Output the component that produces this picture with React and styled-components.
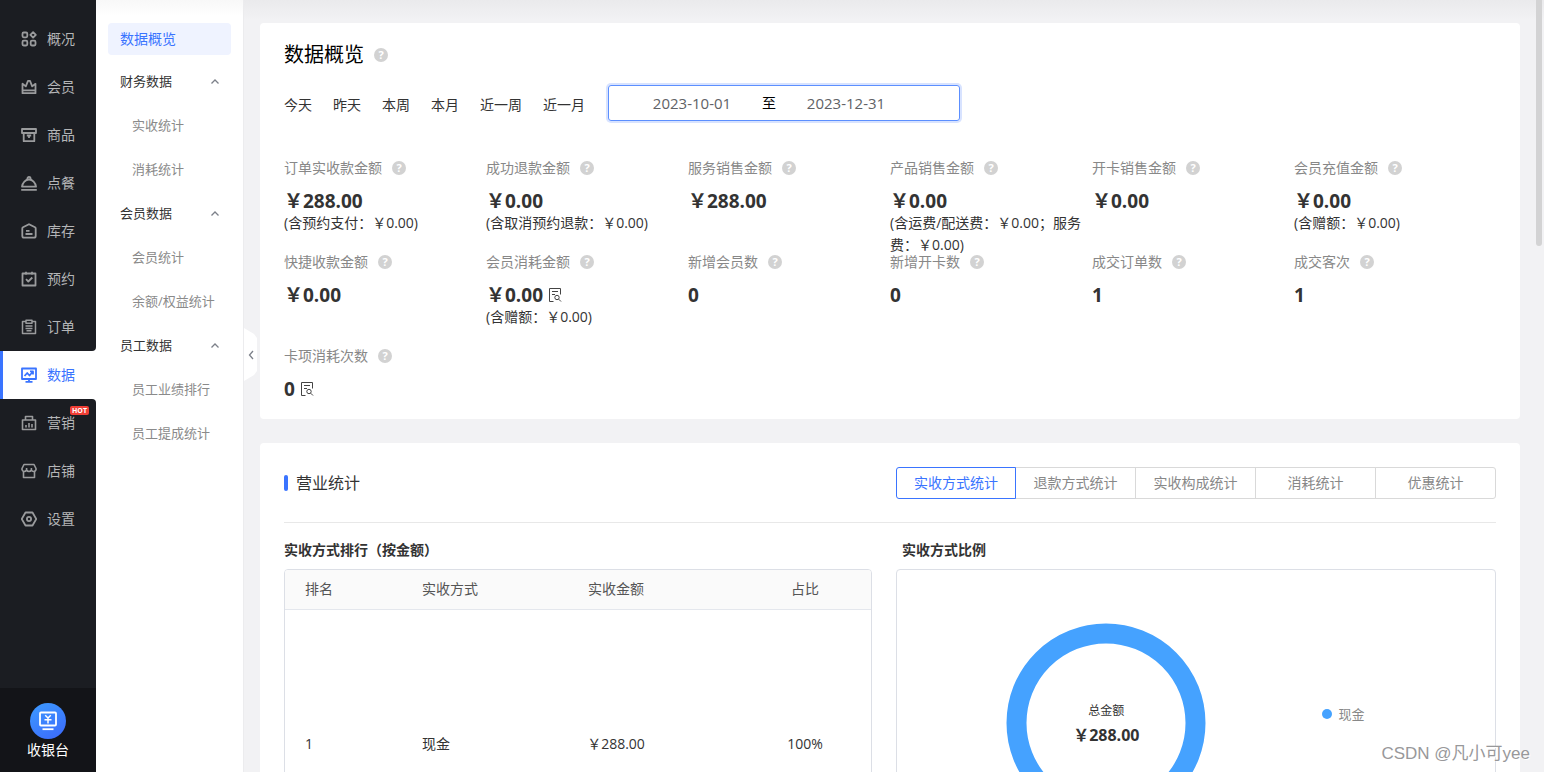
import React, { useState } from 'react';
import styled, { createGlobalStyle, css } from 'styled-components';

// ----- global -----

const GlobalStyle = createGlobalStyle`
    * {
        box-sizing: border-box;
    }
    body {
        margin: 0;
        overflow: hidden;
        color: #333333;
        background-color: #f2f2f4;
        font-family: "Open Sans", "Noto Sans CJK SC", sans-serif;
        font-size: 14px;
        line-height: 22px;
    }
    button, input {
        font-family: inherit;
        font-size: inherit;
        line-height: inherit;
    }
`

// ----- main layout -----

const Page = styled.div`
    display: flex;
    height: 100vh;
    overflow: hidden;
`

const Sidebar = styled.nav`
    display: flex;
    flex-direction: column;
    flex: none;
    width: 96px;
    background-color: #ffffff;
`

const DarkGroup = styled.div`
    background-color: #1b1d22;
    ${p => p.$top && css`
        padding-top: 15px;
        border-bottom-right-radius: 4px;
    `}
    ${p => p.$rest && css`
        flex: 1;
        border-top-right-radius: 4px;
    `}
`

const MenuLink = styled.a`
    position: relative;
    display: flex;
    align-items: center;
    gap: 10px;
    height: 48px;
    padding-left: 21px;
    color: ${p => p.$active ? '#3a74ff' : '#b4b5b7'};
    text-decoration: none;
    ${p => p.$active && css`
        padding-left: 18px;
        border-left: 3px solid #3a74ff;
    `}
`

const MenuIcon = styled.svg`
    flex: none;
    width: 16px;
    height: 16px;
    fill: none;
    stroke: ${p => p.$active ? '#3a74ff' : '#9a9b9d'};
    stroke-width: 1.8;
`

const HotBadge = styled.span`
    position: absolute;
    top: 7px;
    right: 7px;
    padding: 0 2px;
    border-radius: 2px;
    background-color: #f03e35;
    color: #ffffff;
    font-size: 7px;
    font-weight: bold;
    line-height: 9px;
`

const Cashier = styled.button`
    display: flex;
    flex-direction: column;
    align-items: center;
    height: 84px;
    padding: 15px 0 0;
    border: none;
    background-color: #131418;
    color: #ffffff;
    cursor: pointer;
`

const CashierIcon = styled.span`
    display: flex;
    align-items: center;
    justify-content: center;
    width: 36px;
    height: 36px;
    border-radius: 50%;
    background: linear-gradient(150deg, #3c9bff, #3c68fb);
`

// ----- second menu -----

const SubMenu = styled.nav`
    flex: none;
    width: 148px;
    padding: 23px 12px 0;
    border-right: 1px solid #ececee;
    background: linear-gradient(#f8f8f8, #ffffff 16px);
`

const SubActive = styled.a`
    display: block;
    padding: 0 12px;
    border-radius: 4px;
    background-color: #eff3ff;
    color: #3a74ff;
    line-height: 32px;
    text-decoration: none;
`

const SubTitle = styled.button`
    display: flex;
    align-items: center;
    justify-content: space-between;
    width: 100%;
    height: 44px;
    padding: 0 11px 0 12px;
    border: none;
    background: none;
    color: #333333;
    font-size: 13px;
    cursor: pointer;
`

const SubLink = styled.a`
    display: block;
    padding-left: 24px;
    color: #8a8a8a;
    font-size: 13px;
    line-height: 44px;
    text-decoration: none;
`

const SubGroups = styled.div`
    margin-top: 4px;
`

const Arrow = styled.svg`
    fill: none;
    stroke: #7c8089;
    stroke-width: 1.3;
`

const Collapse = styled.button`
    position: absolute;
    top: 328px;
    left: 0;
    width: 14px;
    height: 53px;
    padding: 0;
    border: none;
    background-color: #ffffff;
    clip-path: polygon(0 0, 10px 6px, 13px 10px, 13px 43px, 10px 47px, 0 53px);
    line-height: 0;
    cursor: pointer;
`

// ----- content -----

const Main = styled.main`
    position: relative;
    flex: 1;
    min-width: 0;
    overflow: hidden;
    padding: 23px 24px 0 16px;
    background: linear-gradient(#eaeaec, #f2f2f4 20px);
`

const Card = styled.section`
    margin-bottom: 24px;
    padding: 0 24px;
    border-radius: 4px;
    background-color: #ffffff;
`

const PageTitle = styled.h1`
    display: flex;
    align-items: center;
    gap: 10px;
    margin: 0;
    padding-top: 17px;
    color: #000000;
    font-size: 20px;
    font-weight: normal;
    line-height: 30px;
`

const Filters = styled.div`
    display: flex;
    align-items: center;
    gap: 21px;
    margin-top: 15px;
`

const RangeButton = styled.button`
    padding: 3px 0 0;
    border: none;
    background: none;
    color: #333333;
    cursor: pointer;
`

const DateRange = styled.div`
    display: flex;
    align-items: center;
    width: 352px;
    height: 36px;
    margin-left: 2px;
    padding: 0 43px 0 13px;
    border: 1px solid #5c8fff;
    border-radius: 3px;
    box-shadow: 0 0 0 2px #d8e3ff;
    color: #000000;
`

const DateInput = styled.input`
    flex: 1;
    min-width: 0;
    padding: 0;
    border: none;
    outline: none;
    background: none;
    color: #606266;
    font-size: 15px;
    text-align: center;
`

const Stats = styled.dl`
    display: grid;
    grid-template-columns: repeat(6, 1fr);
    grid-template-rows: 94px 94px;
    margin: 0;
    padding: 36px 0 19px;
`

const StatLabel = styled.dt`
    display: flex;
    align-items: center;
    gap: 10px;
    color: #888888;
`

const StatValue = styled.dd`
    display: flex;
    align-items: center;
    gap: 5px;
    margin: 11px 0 0;
    font-size: 19px;
    font-weight: bold;
`

const StatNote = styled.dd`
    margin: 0;
`

const HelpMark = styled.span`
    display: inline-flex;
    align-items: center;
    justify-content: center;
    width: 14px;
    height: 14px;
    border-radius: 50%;
    background-color: #d2d2d2;
    color: #ffffff;
    font-size: 11px;
    font-weight: bold;
    line-height: 14px;
`

// ----- business statistics -----

const SectionHead = styled.div`
    display: flex;
    align-items: center;
    justify-content: space-between;
    height: 80px;
    border-bottom: 1px solid #e8e8e8;
`

const SectionTitle = styled.h2`
    display: flex;
    align-items: center;
    gap: 8px;
    margin: 0;
    font-size: 16px;
    font-weight: normal;

    &::before {
        content: '';
        width: 4px;
        height: 16px;
        border-radius: 2px;
        background-color: #3a74ff;
    }
`

const Tabs = styled.div`
    display: flex;
`

const Tab = styled.button`
    width: 121px;
    height: 32px;
    margin-left: -1px;
    padding: 0;
    border: 1px solid ${p => p.$active ? '#3a74ff' : '#d9d9d9'};
    background-color: #ffffff;
    color: ${p => p.$active ? '#3a74ff' : '#888888'};
    cursor: pointer;
    ${p => p.$active && 'z-index: 1;'}

    &:first-child {
        width: 120px;
        margin-left: 0;
        border-radius: 3px 0 0 3px;
    }
    &:last-child {
        border-radius: 0 3px 3px 0;
    }
`

const Columns = styled.div`
    display: grid;
    grid-template-columns: 49fr 50fr;
    gap: 24px;
    padding: 16px 0 24px;
`

const Panel = styled.div`
    display: flex;
    flex-direction: column;
`

const PanelTitle = styled.h3`
    margin: 0 0 8px;
    padding-left: ${p => p.$indent ? '6px' : '0'};
    font-size: 14px;
    line-height: 22px;
`

const PanelBox = styled.div`
    border: 1px solid #dcdfe6;
    border-radius: 4px;
    overflow: hidden;
`

const RankTable = styled.table`
    width: 100%;
    border-collapse: collapse;
    table-layout: fixed;
    text-align: left;

    th {
        height: 39px;
        padding: 0;
        border-bottom: 1px solid #e4e7ed;
        background-color: #fafafa;
        color: #555555;
        font-weight: normal;
    }
    td {
        height: 270px;
        padding: 0;
    }
    th:first-child, td:first-child {
        width: 137px;
        padding-left: 20px;
    }
    th:nth-child(2) {
        width: 141px;
    }
    th:nth-child(3), td:nth-child(3) {
        width: 106px;
        text-align: center;
    }
    th:last-child, td:last-child {
        padding-left: 70px;
        text-align: center;
    }
`

const ChartBox = styled(PanelBox)`
    display: grid;
    grid-template-columns: 70% 30%;
    align-items: center;
    height: 308px;
`

const Donut = styled.div`
    display: grid;
    place-items: center;

    & > * {
        grid-area: 1 / 1;
    }
`

const DonutText = styled.div`
    text-align: center;
    font-size: 12px;
    line-height: 24px;

    strong {
        display: block;
        font-size: 16px;
    }
`

const Legend = styled.div`
    display: flex;
    align-items: center;
    gap: 7px;
    margin-bottom: 18px;
    padding-left: 6px;
    color: #888888;
    font-size: 13px;

    &::before {
        content: '';
        width: 10px;
        height: 10px;
        border-radius: 50%;
        background-color: #45a2ff;
    }
`

const ScrollThumb = styled.div`
    position: absolute;
    top: 0;
    right: 2px;
    width: 6px;
    height: 246px;
    border-radius: 0 0 3px 3px;
    background-color: #d3d3d4;
`

const Watermark = styled.div`
    position: absolute;
    right: 14px;
    bottom: 7px;
    color: #98989a;
    font-family: "Liberation Sans", "Noto Sans CJK SC", sans-serif;
    font-size: 17px;
    text-shadow: 1px 1px 0 #ffffff;
`

// ----- data -----

const icons = {
    overview: <><rect x="1.5" y="1.5" width="4.8" height="4.8" rx="1.2" /><rect x="1.5" y="9.7" width="4.8" height="4.8" rx="1.2" /><rect x="9.7" y="9.7" width="4.8" height="4.8" rx="1.2" /><path d="M12.1 1.2 14.8 3.9 12.1 6.6 9.4 3.9Z" strokeLinejoin="round" /></>,
    member: <path d="M1.5 4.8v9.4h13V4.8l-3.3 2.6L9 1.8H7L4.8 7.4ZM2 11.3h12" strokeLinejoin="round" />,
    goods: <path d="M1 2h14v4H1ZM2.7 6v8.2h10.6V6M5.8 8.5h4.4M8 8.5v2.5" strokeLinejoin="round" />,
    dining: <path d="M.2 14.8h15.6M1 11.7h14C14.5 7.5 11.5 4.5 8 4.5S1.5 7.5 1 11.7ZM6.3 4.3C6.3 1 9.7 1 9.7 4.3" strokeLinejoin="round" />,
    stock: <path d="M1.3 5.5Q1.3 4.7 2 4.3L8 1.3 14 4.3Q14.7 4.7 14.7 5.5V13Q14.7 14.7 13 14.7H3Q1.3 14.7 1.3 13ZM5 7.8h3.5M4.5 11h7" />,
    booking: <path d="M1.5 2.5h13v12h-13ZM5 .8v3M11 .8v3M5 8.2l2.3 2.3L11.3 6.5" strokeLinejoin="round" />,
    order: <path d="M5 2.5H1.5v12h13v-12H11M5 1.2h6v3H5ZM4.5 7h7M4.5 9.4h7M5.5 11.8h5" strokeWidth="1.5" strokeLinejoin="round" />,
    data: <path d="M1 1.5h14v10.5H1ZM8 12v2.5M4.5 14.8h7M3.5 9l2.7-3 2.3 2.5 3.5-4M9 4.4h3v3" strokeLinejoin="round" />,
    marketing: <path d="M1.5 5h13v9.5h-13ZM4.5 5V1.5h7V5M5 10v2.5M8 8v4.5M11 9v3.5" strokeWidth="1.6" strokeLinejoin="round" />,
    shop: <path d="M3 1.5h10l2 4v1.3Q14.5 8.5 12.8 8.5T10.4 7Q9.5 8.5 8 8.5T5.6 7Q4.7 8.5 3.2 8.5T1 6.8V5.5ZM2.5 8.5v6h11v-6M5.6 5v2.5M10.4 5v2.5" strokeWidth="1.6" strokeLinejoin="round" />,
    settings: <><path d="M4.5 1.5h7L15.3 8l-3.8 6.5h-7L.7 8Z" strokeLinejoin="round" /><circle cx="8" cy="8" r="2.1" /></>,
}

const menuTop = [
    { icon: 'overview', text: '概况' },
    { icon: 'member', text: '会员' },
    { icon: 'goods', text: '商品' },
    { icon: 'dining', text: '点餐' },
    { icon: 'stock', text: '库存' },
    { icon: 'booking', text: '预约' },
    { icon: 'order', text: '订单' },
]

const menuRest = [
    { icon: 'marketing', text: '营销', hot: true },
    { icon: 'shop', text: '店铺' },
    { icon: 'settings', text: '设置' },
]

const subMenu = [
    { title: '财务数据', links: ['实收统计', '消耗统计'] },
    { title: '会员数据', links: ['会员统计', '余额/权益统计'] },
    { title: '员工数据', links: ['员工业绩排行', '员工提成统计'] },
]

const ranges = ['今天', '昨天', '本周', '本月', '近一周', '近一月']

const stats = [
    { label: '订单实收款金额', value: '￥288.00', note: '(含预约支付：￥0.00)' },
    { label: '成功退款金额', value: '￥0.00', note: '(含取消预约退款：￥0.00)' },
    { label: '服务销售金额', value: '￥288.00' },
    { label: '产品销售金额', value: '￥0.00', note: '(含运费/配送费：￥0.00；服务费：￥0.00)' },
    { label: '开卡销售金额', value: '￥0.00' },
    { label: '会员充值金额', value: '￥0.00', note: '(含赠额：￥0.00)' },
    { label: '快捷收款金额', value: '￥0.00' },
    { label: '会员消耗金额', value: '￥0.00', note: '(含赠额：￥0.00)', detail: true },
    { label: '新增会员数', value: '0' },
    { label: '新增开卡数', value: '0' },
    { label: '成交订单数', value: '1' },
    { label: '成交客次', value: '1' },
    { label: '卡项消耗次数', value: '0', detail: true },
]

const tabs = ['实收方式统计', '退款方式统计', '实收构成统计', '消耗统计', '优惠统计']

// ----- small parts -----

const MenuItem = ({ icon, text, hot, active }) => (
    <MenuLink href="#" $active={active}>
        <MenuIcon viewBox="0 0 16 16" $active={active}>{icons[icon]}</MenuIcon>
        {text}
        {hot && <HotBadge>HOT</HotBadge>}
    </MenuLink>
)

const DetailIcon = () => (
    <svg width="14" height="16" viewBox="0 0 14 16" fill="none" stroke="#444444">
        <path d="M5.5 14.5h-4v-13h11v6M4 4.5h6M4 7.5h3" />
        <circle cx="9" cy="10.5" r="2.2" />
        <path d="M10.7 12.2 13 14.5" />
    </svg>
)

const Stat = ({ label, value, note, detail }) => (
    <div>
        <StatLabel>{label}<HelpMark>?</HelpMark></StatLabel>
        <StatValue>{value}{detail && <DetailIcon />}</StatValue>
        {note && <StatNote>{note}</StatNote>}
    </div>
)

// ----- app -----

export default function App() {
    const [tab, setTab] = useState(tabs[0])
    const [from, setFrom] = useState('2023-10-01')
    const [to, setTo] = useState('2023-12-31')

    return (
        <Page>
            <GlobalStyle />
            <Sidebar>
                <DarkGroup $top>
                    {menuTop.map(item => <MenuItem key={item.text} {...item} />)}
                </DarkGroup>
                <MenuItem icon="data" text="数据" active />
                <DarkGroup $rest>
                    {menuRest.map(item => <MenuItem key={item.text} {...item} />)}
                </DarkGroup>
                <Cashier>
                    <CashierIcon>
                        <svg width="20" height="20" viewBox="0 0 20 20" fill="none" stroke="#ffffff" strokeWidth="1.8">
                            <rect x="2" y="1.5" width="16" height="13" rx="1" />
                            <path d="M4.5 18.2h11" />
                            <path d="M7.2 4.3 10 7l2.8-2.7M6.5 8.8h7M10 7v5.5" strokeWidth="1.5" />
                        </svg>
                    </CashierIcon>
                    收银台
                </Cashier>
            </Sidebar>

            <SubMenu>
                <SubActive href="#">数据概览</SubActive>
                <SubGroups>
                    {subMenu.map(group => (
                        <div key={group.title}>
                            <SubTitle>
                                {group.title}
                                <Arrow width="10" height="6" viewBox="0 0 10 6"><path d="M1.5 5.5 5 2 8.5 5.5" /></Arrow>
                            </SubTitle>
                            {group.links.map(link => <SubLink href="#" key={link}>{link}</SubLink>)}
                        </div>
                    ))}
                </SubGroups>
            </SubMenu>

            <Main>
                <Card>
                    <PageTitle>数据概览<HelpMark>?</HelpMark></PageTitle>
                    <Filters>
                        {ranges.map(range => <RangeButton key={range}>{range}</RangeButton>)}
                        <DateRange>
                            <DateInput aria-label="开始日期" value={from} onChange={e => setFrom(e.target.value)} />
                            至
                            <DateInput aria-label="结束日期" value={to} onChange={e => setTo(e.target.value)} />
                        </DateRange>
                    </Filters>
                    <Stats>
                        {stats.map(item => <Stat key={item.label} {...item} />)}
                    </Stats>
                </Card>

                <Card>
                    <SectionHead>
                        <SectionTitle>营业统计</SectionTitle>
                        <Tabs>
                            {tabs.map(name => (
                                <Tab key={name} $active={name === tab} onClick={() => setTab(name)}>{name}</Tab>
                            ))}
                        </Tabs>
                    </SectionHead>
                    <Columns>
                        <Panel>
                            <PanelTitle>实收方式排行（按金额）</PanelTitle>
                            <PanelBox>
                                <RankTable>
                                    <thead>
                                        <tr><th>排名</th><th>实收方式</th><th>实收金额</th><th>占比</th></tr>
                                    </thead>
                                    <tbody>
                                        <tr><td>1</td><td>现金</td><td>￥288.00</td><td>100%</td></tr>
                                    </tbody>
                                </RankTable>
                            </PanelBox>
                        </Panel>
                        <Panel>
                            <PanelTitle $indent>实收方式比例</PanelTitle>
                            <ChartBox>
                                <Donut>
                                    <svg width="200" height="200" viewBox="0 0 200 200">
                                        <circle cx="100" cy="100" r="89.5" fill="none" stroke="#45a2ff" strokeWidth="20" />
                                    </svg>
                                    <DonutText>总金额<strong>￥288.00</strong></DonutText>
                                </Donut>
                                <Legend>现金</Legend>
                            </ChartBox>
                        </Panel>
                    </Columns>
                </Card>

                <Collapse aria-label="收起菜单">
                    <Arrow width="6" height="10" viewBox="0 0 6 10"><path d="M5 1 1.5 5 5 9" /></Arrow>
                </Collapse>
                <ScrollThumb />
                <Watermark>CSDN @凡小可yee</Watermark>
            </Main>
        </Page>
    );
}
